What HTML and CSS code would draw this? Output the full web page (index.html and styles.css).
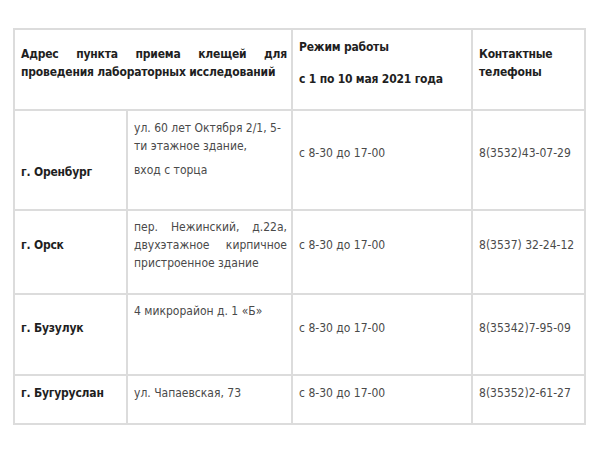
FILE: index.html
```html
<!DOCTYPE html>
<html lang="ru">
<head>
<meta charset="utf-8">
<title>Пункты приема клещей</title>
<link rel="stylesheet" href="styles.css">
</head>
<body>
<table class="ticks">
  <colgroup>
    <col class="c1"><col class="c2"><col class="c3"><col class="c4">
  </colgroup>
  <tr class="r-head">
    <th colspan="2" class="just"><p>Адрес пункта приема клещей для проведения лабораторных исследований</p></th>
    <th><p>Режим работы</p><p>с 1 по 10 мая 2021 года</p></th>
    <th><p>Контактные телефоны</p></th>
  </tr>
  <tr class="r1">
    <th class="low"><p>г. Оренбург</p></th>
    <td class="raise"><p class="tight">ул. 60 лет Октября 2/1, 5-ти этажное здание,</p><p>вход с торца</p></td>
    <td><p>с 8-30 до 17-00</p></td>
    <td class="phone"><p>8(3532)43-07-29</p></td>
  </tr>
  <tr class="r2">
    <th><p>г. Орск</p></th>
    <td class="just"><p>пер. Нежинский, д.22а, двухэтажное кирпичное пристроенное здание</p></td>
    <td><p>с 8-30 до 17-00</p></td>
    <td class="phone"><p>8(3537) 32-24-12</p></td>
  </tr>
  <tr class="r3">
    <th><p>г. Бузулук</p></th>
    <td class="top"><p>4 микрорайон д. 1 «Б»</p></td>
    <td><p>с 8-30 до 17-00</p></td>
    <td class="phone"><p>8(35342)7-95-09</p></td>
  </tr>
  <tr class="r4">
    <th><p>г. Бугуруслан</p></th>
    <td><p>ул. Чапаевская, 73</p></td>
    <td><p>с 8-30 до 17-00</p></td>
    <td class="phone"><p>8(35352)2-61-27</p></td>
  </tr>
</table>
</body>
</html>
```
FILE: styles.css
```css
html, body {
  margin: 0;
  background: #fff;
}
body {
  padding: 28px 0 0 13px;
  font-family: "DejaVu Sans Condensed", "DejaVu Sans", sans-serif;
  font-size: 12px;
  line-height: 18px;
  color: #4a4a4a;
}
.ticks {
  border-collapse: collapse;
  table-layout: fixed;
  width: 571px;
}
.c1 { width: 113px; }
.c2 { width: 165px; }
.c3 { width: 180px; }
.c4 { width: 113px; }
.ticks th, .ticks td {
  border: 2px solid #dcdcdc;
  padding: 0 4px 0 6px;
  vertical-align: middle;
  text-align: left;
}
.ticks th {
  color: #1f1f1f;
  font-weight: bold;
  letter-spacing: -0.2px;
}
.ticks p {
  margin: 0 0 14px;
}
.ticks p.tight { margin-bottom: 6px; }
.ticks th.just, .ticks td.just { text-align: justify; }
.ticks td.top { vertical-align: top; padding-top: 7px; }
.ticks td.raise { padding-bottom: 8px; }
.ticks th.low { padding-top: 38px; }
.phone { white-space: nowrap; }
.r-head { height: 81px; }
.r1 { height: 100px; }
.r2 { height: 84px; }
.r3 { height: 81px; }
.r4 { height: 49px; }
```
